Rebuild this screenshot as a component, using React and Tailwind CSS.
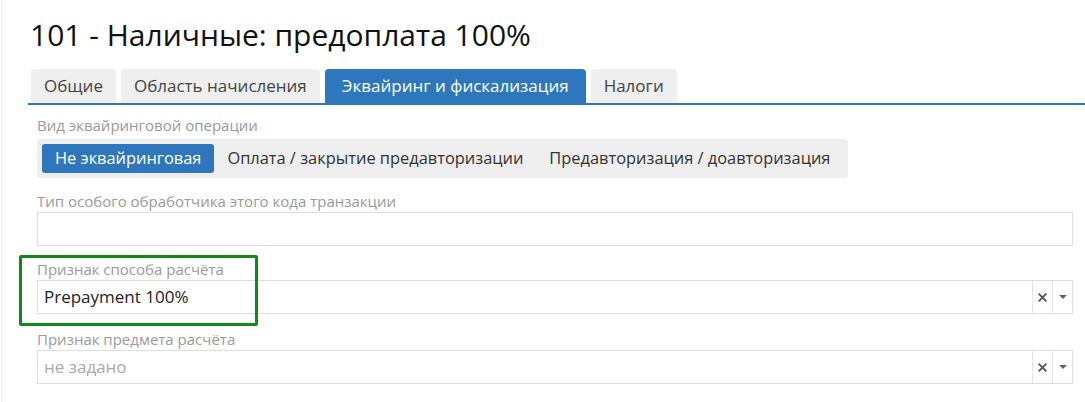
import React, { useState } from 'react';

const tabs = ['Общие', 'Область начисления', 'Эквайринг и фискализация', 'Налоги'];
const modes = ['Не эквайринговая', 'Оплата / закрытие предавторизации', 'Предавторизация / доавторизация'];

const SelectBox = ({ value, placeholder }) => (
  <div className="flex h-[34px] items-stretch border border-[#dedede] bg-white">
    <div className={`flex flex-1 items-center px-[6px] text-[17px] ${value ? 'text-[#222]' : 'text-[#aaa]'}`}>
      {value || placeholder}
    </div>
    <div className="flex w-[20px] items-center justify-center border-l border-[#e4e4e4] text-[#555]">
      <svg width="11" height="11" viewBox="0 0 10 10">
        <path d="M1.5 1.5 L8.5 8.5 M8.5 1.5 L1.5 8.5" stroke="currentColor" strokeWidth="1.7" />
      </svg>
    </div>
    <div className="flex w-[20px] items-center justify-center border-l border-[#e4e4e4] text-[#666]">
      <svg width="8" height="5" viewBox="0 0 8 5">
        <path d="M0 0 L8 0 L4 4 Z" fill="currentColor" />
      </svg>
    </div>
  </div>
);

const App = () => {
  const [tab, setTab] = useState(2);
  const [mode, setMode] = useState(0);

  return (
    <div className="min-h-[402px] w-[1085px] bg-white font-['Open_Sans',sans-serif]">
      <div className="ml-[1px] border-l border-[#f0f0f0] pb-[18px]">
        <h1 className="pl-[28px] pt-[15px] text-[30px] font-medium leading-[40px] text-[#111]">101 - Наличные: предоплата 100%</h1>

        {/* Tabs */}
        <div className="mt-[14px] ml-[26px] flex gap-[5px] border-b-2 border-[#2e77bc] pl-[3px]">
          {tabs.map((t, i) => (
            <button
              key={t}
              onClick={() => setTab(i)}
              className={`h-[34px] rounded-t-[4px] text-[17px] ${
                tab === i ? 'bg-[#2e77bc] px-[17px] text-white' : 'bg-[#efefef] px-[13px] text-[#444]'
              }`}
            >
              {t}
            </button>
          ))}
        </div>

        <div className="pl-[35px] pr-[12px]">
          <div className="mt-[10px] text-[15px] leading-[20px] text-[#9a9a9a]">Вид эквайринговой операции</div>
          <div className="mt-[4px] inline-flex rounded-[4px] bg-[#eeeeee] p-[5px]">
            {modes.map((m, i) => (
              <button
                key={m}
                onClick={() => setMode(i)}
                className={`h-[29px] rounded-[3px] px-[13px] text-[16.4px] ${
                  mode === i ? 'bg-[#2e77bc] text-white' : 'text-[#333]'
                }`}
              >
                {m}
              </button>
            ))}
          </div>

          <div className="mt-[13px] text-[15px] leading-[20px] text-[#9a9a9a]">Тип особого обработчика этого кода транзакции</div>
          <div className="mt-[1px] h-[34px] border border-[#dedede]"></div>

          <div className="relative mt-[13px]">
            <div className="pointer-events-none absolute left-[-18px] top-[-4px] h-[71px] w-[239px] rounded-[2px] border-[3px] border-[#14871a]"></div>
            <div className="text-[15px] leading-[20px] text-[#9a9a9a]">Признак способа расчёта</div>
            <div className="mt-[1px]">
              <SelectBox value="Prepayment 100%" />
            </div>
          </div>

          <div className="mt-[15px] text-[15px] leading-[20px] text-[#9a9a9a]">Признак предмета расчёта</div>
          <div className="mt-[1px]">
            <SelectBox placeholder="не задано" />
          </div>
        </div>
      </div>
    </div>
  );
};

export default App;
